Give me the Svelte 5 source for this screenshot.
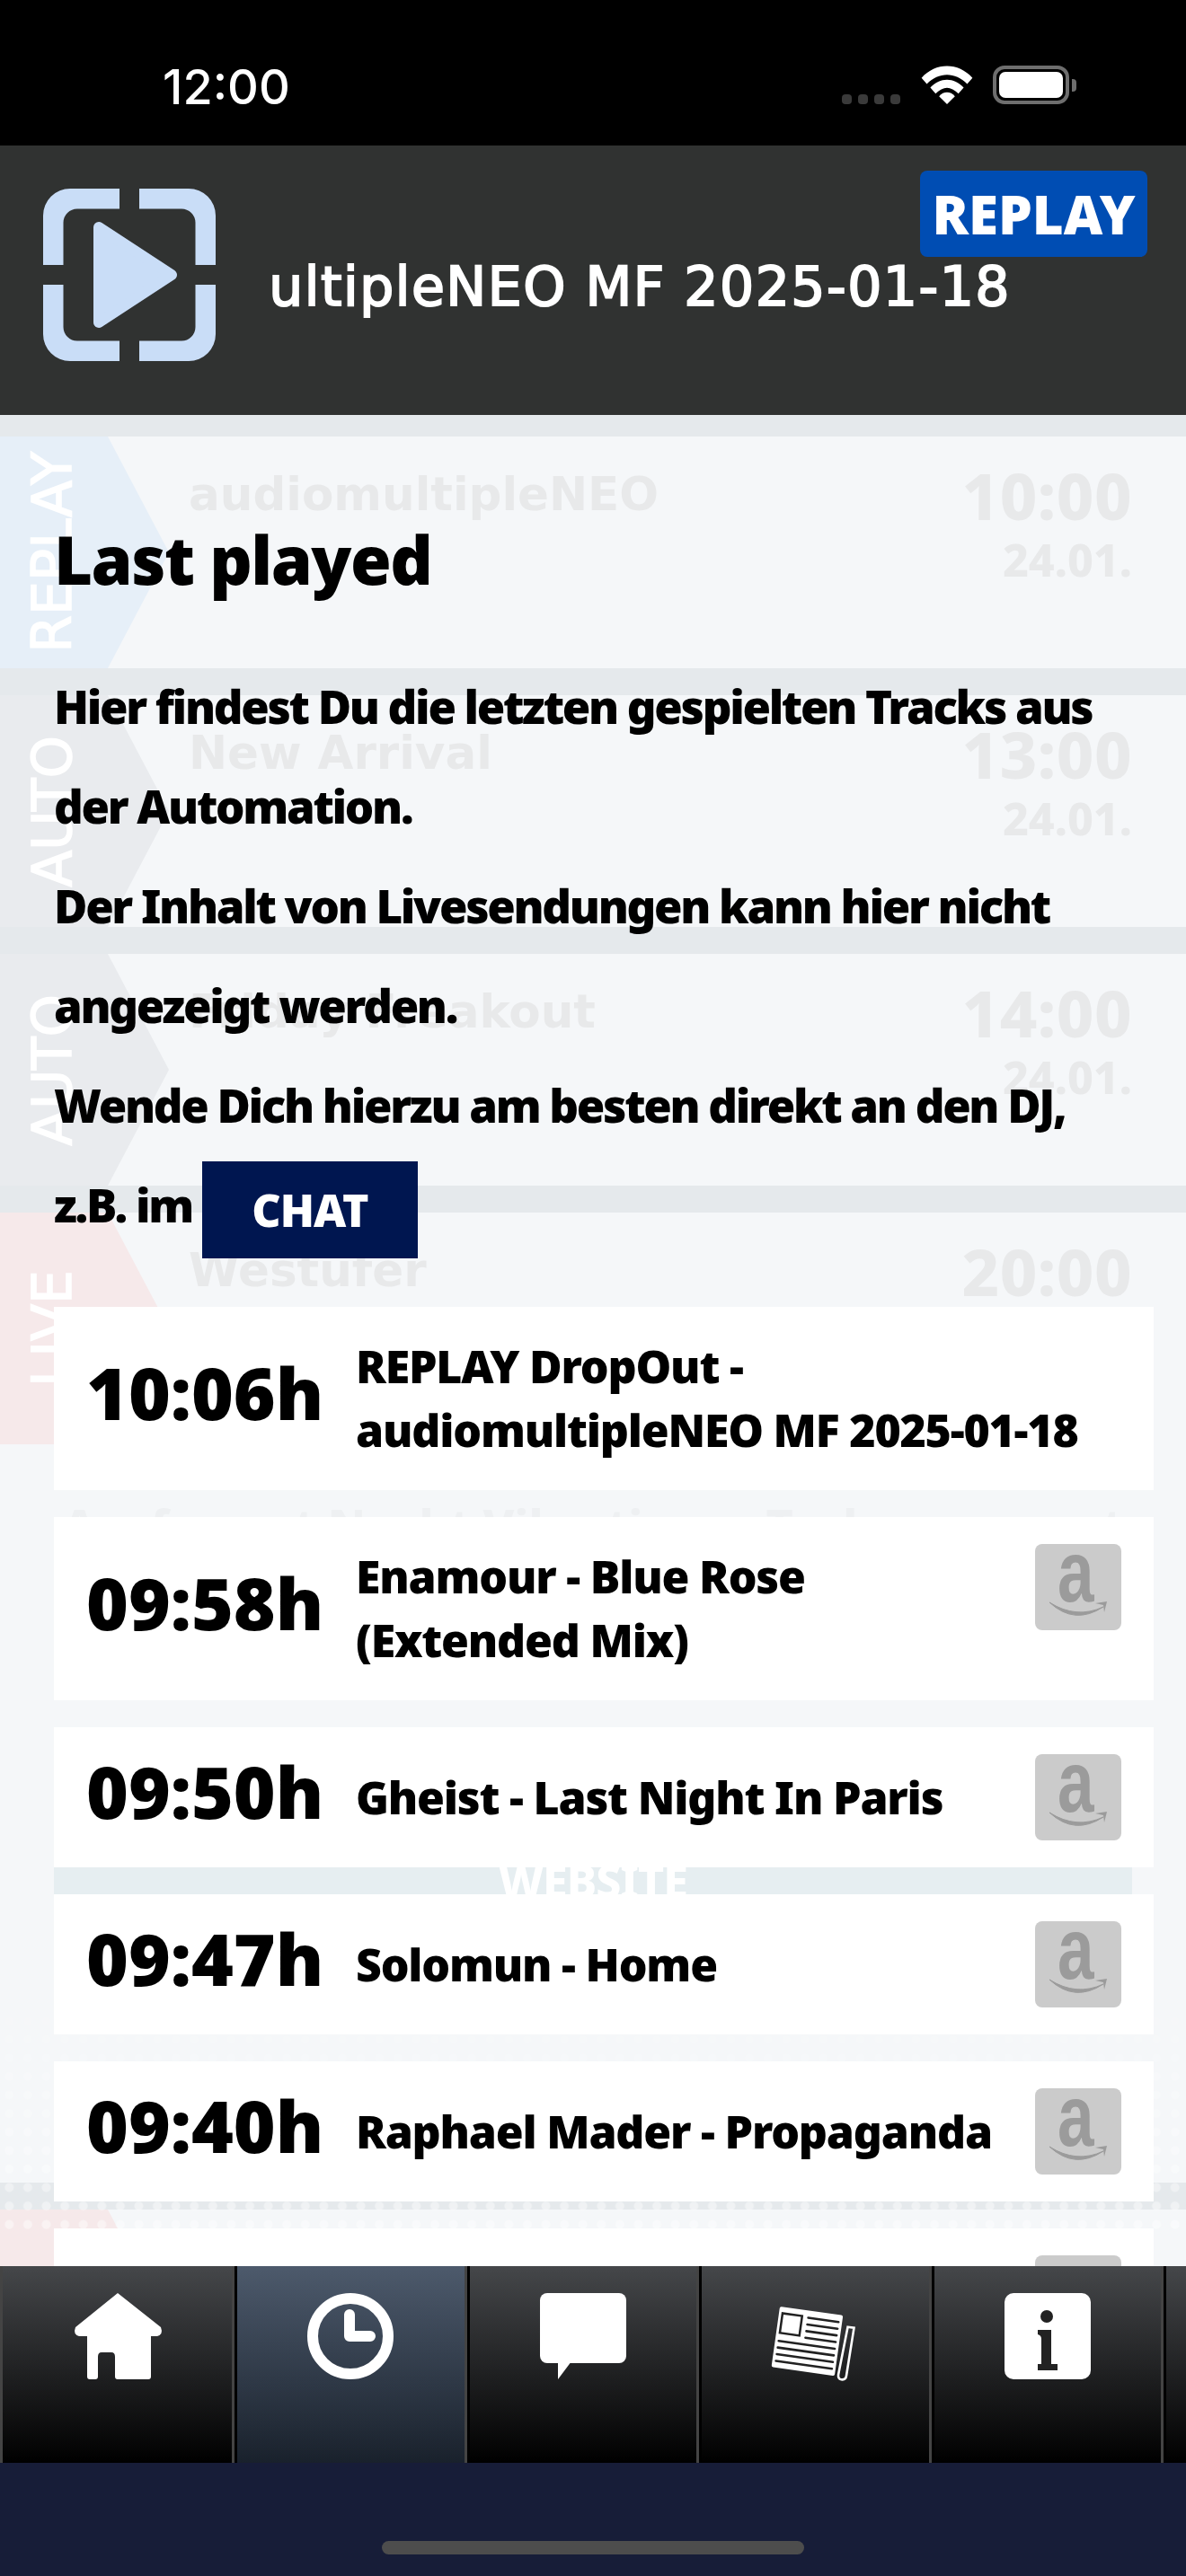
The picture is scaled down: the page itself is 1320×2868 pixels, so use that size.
<script>
  // Last played screen of the radio app: schedule rows sit faded behind the overlay.
  const SCHEDULE = [
    { tag: 'REPLAY', kind: 'replay', show: 'audiomultipleNEO', time: '10:00', date: '24.01.' },
    { tag: 'AUTO', kind: 'auto', show: 'New Arrival', time: '13:00', date: '24.01.' },
    { tag: 'AUTO', kind: 'auto', show: 'Friday Freakout', time: '14:00', date: '24.01.' },
    { tag: 'LIVE', kind: 'live', show: 'Westufer', time: '20:00', date: '' },
  ];

  const TRACKS = [
    { time: '10:06h', title: 'REPLAY DropOut - audiomultipleNEO MF 2025-01-18', shop: false, tall: true },
    { time: '09:58h', title: 'Enamour - Blue Rose (Extended Mix)', shop: true, tall: true },
    { time: '09:50h', title: 'Gheist - Last Night In Paris', shop: true },
    { time: '09:47h', title: 'Solomun - Home', shop: true },
    { time: '09:40h', title: 'Raphael Mader - Propaganda', shop: true },
    { time: '', title: '', shop: true, tall: true },
  ];

  const TABS = ['home', 'clock', 'chat', 'news', 'info', ''];
</script>

<div class="phone">
  <div class="status">
    <span class="clock">12:00</span>
    <div class="status-icons">
      <div class="cell-dots"><i></i><i></i><i></i><i></i></div>
      <svg class="wifi" viewBox="0 0 58 44" aria-hidden="true">
        <path d="M0 14 C16 -4 42 -4 58 14 L52 21 C38 7 20 7 6 21 Z" fill="#fff" />
        <path d="M10 25 C21 13 37 13 48 25 L42 32 C33 23 25 23 16 32 Z" fill="#fff" />
        <path d="M20 35 C25 29 33 29 38 35 L29 44 Z" fill="#fff" />
      </svg>
      <div class="battery"><div class="battery-fill"></div></div>
      <div class="battery-nub"></div>
    </div>
  </div>

  <header class="topbar">
    <svg class="logo" viewBox="0 0 192 192" aria-hidden="true">
      {#each ['', 'translate(192 0) scale(-1 1)', 'translate(0 192) scale(1 -1)', 'translate(192 192) scale(-1 -1)'] as t}
        <path transform={t} fill="#c9ddf7" d="M85 0 H30 A30 30 0 0 0 0 30 V85 H22.5 V38 A15.5 15.5 0 0 1 38 22.5 H85 Z" />
      {/each}
      <path d="M62 43 L143 96 L62 149 Z" fill="#c9ddf7" stroke="#c9ddf7" stroke-width="12" stroke-linejoin="round" />
    </svg>
    <div class="marquee"><span>audiomultipleNEO MF 2025-01-18</span></div>
    <div class="replay-badge">REPLAY</div>
  </header>

  <main class="main">
    <div class="schedule" aria-hidden="true">
      {#each SCHEDULE as row}
        <div class="sched-row">
          <div class="chevron {row.kind}"><span>{row.tag}</span></div>
          <div class="sched-show">{row.show}</div>
          <div class="sched-when">
            <div class="sched-time">{row.time}</div>
            <div class="sched-date">{row.date}</div>
          </div>
        </div>
      {/each}
      <div class="promo">
        <div class="promo-text">Ausformat Nacht Vibrations - Technoconnect</div>
        <div class="promo-bar"><span>WEBSITE</span></div>
        <div class="dots"></div>
      </div>
      <div class="sched-row last">
        <div class="chevron live"></div>
      </div>
    </div>

    <div class="content">
      <h1>Last played</h1>
      <p>Hier findest Du die letzten gespielten Tracks aus der Automation.</p>
      <p>Der Inhalt von Livesendungen kann hier nicht angezeigt werden.</p>
      <p>Wende Dich hierzu am besten direkt an den DJ, z.B. im <button class="chat-btn">CHAT</button></p>

      <div class="tracks">
        {#each TRACKS as track}
          <div class="track" class:tall={track.tall}>
            <div class="track-time">{track.time}</div>
            <div class="track-title" class:narrow={track.shop}>{track.title}</div>
            {#if track.shop}
              <div class="shop">
                <svg viewBox="0 0 96 96" aria-hidden="true">
                  <text x="0" y="64" transform="translate(25 0) scale(0.76 1)" class="shop-a">a</text>
                  <path d="M16 65 Q44 91 76 70 Q46 84 16 65 Z" fill="#9b9b9b" stroke="#9b9b9b" stroke-width="1" />
                  <path d="M67 66 L80 64 L77 76 L76 68 Z" fill="#9b9b9b" />
                </svg>
              </div>
            {/if}
          </div>
        {/each}
      </div>
    </div>
  </main>

  <nav class="tabs">
    {#each TABS as tab, i}
      <div class="tab" class:active={i === 1}>
        {#if tab === 'home'}
          <svg viewBox="0 0 96 96" aria-hidden="true">
            <path fill="#fff" d="M48 0 L96 38 Q99 46 92 48 H85 V93 Q85 96 82 96 H48 Q45 96 45 93 V71 Q45 66 41 66 H30 Q26 66 26 71 V93 Q26 96 23 96 H17 Q14 96 14 93 V48 H5 Q-2 46 1 38 Z" />
          </svg>
        {:else if tab === 'clock'}
          <svg viewBox="0 0 96 96" aria-hidden="true">
            <circle cx="48" cy="48" r="42" fill="none" stroke="#fff" stroke-width="12" />
            <path d="M47 24 V48 H70" fill="none" stroke="#fff" stroke-width="12" stroke-linecap="round" stroke-linejoin="round" />
          </svg>
        {:else if tab === 'chat'}
          <svg viewBox="0 0 96 96" aria-hidden="true">
            <rect width="96" height="78" rx="8" fill="#fff" />
            <path d="M20 76 V96 L35 76 Z" fill="#fff" />
          </svg>
        {:else if tab === 'news'}
          <svg viewBox="0 0 96 96" aria-hidden="true">
            <g transform="translate(9 15) rotate(8)">
              <rect width="71" height="68" rx="2" fill="#fff" />
              <rect x="4" y="7" width="22" height="22" fill="#fff" stroke="#222" stroke-width="2.5" />
              <g stroke="#222" stroke-width="2.6" stroke-linecap="round">
                <path d="M33 8 H67 M33 15.5 H67 M33 23 H67 M33 30.5 H67" />
                <path d="M4 38 H67 M4 45.5 H67 M4 53 H67 M4 60.5 H67" />
              </g>
              <path d="M78 12 H85 L84 66 Q84 71 79 71 Q75 71 75 66 Z" fill="none" stroke="#fff" stroke-width="2.6" />
            </g>
          </svg>
        {:else if tab === 'info'}
          <svg viewBox="0 0 96 96" aria-hidden="true">
            <rect width="96" height="96" rx="10" fill="#fff" />
            <circle cx="47" cy="26" r="7" fill="#222" />
            <path fill="#222" d="M37 41 H52 V79 H59 V86 H37 V79 H41 V51 Q41 47 37 46 Z" />
          </svg>
        {/if}
      </div>
    {/each}
  </nav>

  <div class="home-area"><div class="home-indicator"></div></div>
</div>

<style>
  :global(body) {
    margin: 0;
    background: #000;
  }
  .phone {
    width: 1320px;
    height: 2868px;
    overflow: hidden;
    display: flex;
    flex-direction: column;
    font-family: "Noto Sans", Lato, sans-serif;
    color: #000;
  }
  .status {
    height: 162px;
    background: #000;
    flex: none;
    display: flex;
    justify-content: space-between;
    box-sizing: border-box;
    padding: 62px 122px 0 181px;
  }
  .clock {
    font-family: Inter, sans-serif;
    font-weight: 500;
    font-size: 54px;
    line-height: 70px;
    color: #fff;
  }
  .status-icons {
    display: flex;
    align-items: flex-start;
    padding-top: 11px;
  }
  .cell-dots {
    display: flex;
    gap: 7px;
    margin-top: 32px;
    margin-right: 23px;
  }
  .cell-dots i {
    width: 11px;
    height: 11px;
    border-radius: 4px;
    background: #3a3a3a;
  }
  .wifi {
    width: 58px;
    height: 43px;
    margin-right: 22px;
  }
  .battery {
    width: 85px;
    height: 43px;
    box-sizing: border-box;
    border: 4px solid #6e6e6e;
    border-radius: 13px;
    padding: 3px;
  }
  .battery-fill {
    height: 100%;
    background: #fff;
    border-radius: 7px;
  }
  .battery-nub {
    width: 5px;
    height: 14px;
    margin: 15px 0 0 3px;
    background: #6e6e6e;
    border-radius: 0 4px 4px 0;
  }

  .topbar {
    height: 300px;
    flex: none;
    background: #303231;
    display: flex;
    align-items: flex-start;
    position: relative;
    box-sizing: border-box;
    padding: 48px 200px 0 48px;
  }
  .logo {
    width: 192px;
    height: 192px;
    flex: none;
  }
  .marquee {
    width: 826px;
    margin: 71px 0 0 59px;
    overflow: hidden;
    display: flex;
    justify-content: flex-end;
    font-family: "DejaVu Sans", sans-serif;
    font-size: 60px;
    letter-spacing: 1.5px;
    -webkit-text-stroke: 2px #fff;
    line-height: 76px;
    color: #fff;
    white-space: nowrap;
    flex: none;
  }
  .replay-badge {
    position: absolute;
    left: 1024px;
    top: 28px;
    width: 253px;
    height: 96px;
    background: #004db3;
    border-radius: 8px;
    color: #fff;
    font-weight: 900;
    font-size: 60px;
    line-height: 96px;
    text-align: center;
  }

  .main {
    flex: none;
    height: 2061px;
    position: relative;
    overflow: hidden;
    background: #e5e9ec;
    box-sizing: border-box;
  }
  .schedule {
    position: absolute;
    left: 0;
    right: 0;
    top: 24px;
    z-index: 0;
  }
  .sched-row {
    height: 258px;
    margin-bottom: 30px;
    background: #f5f7f9;
    position: relative;
    display: flex;
    justify-content: space-between;
    box-sizing: border-box;
    padding-left: 210px;
    padding-right: 60px;
    overflow: hidden;
  }
  .sched-row:nth-child(4) {
    margin-bottom: 0;
  }
  .chevron {
    position: absolute;
    left: 0;
    top: 0;
    bottom: 0;
    width: 188px;
    clip-path: polygon(0 0, 120px 0, 188px 50%, 120px 100%, 0 100%);
    display: flex;
    align-items: center;
    justify-content: flex-start;
  }
  .chevron span {
    writing-mode: vertical-rl;
    transform: rotate(180deg);
    font-family: "DejaVu Sans", sans-serif;
    font-size: 60px;
    -webkit-text-stroke: 1.5px #fff;
    color: #fff;
    line-height: 60px;
    margin-left: 28px;
    white-space: nowrap;
  }
  .replay {
    background: #e6eff8;
  }
  .auto {
    background: #e9ebee;
  }
  .live {
    background: #f6e9ea;
  }
  .sched-show {
    font-family: "DejaVu Sans", sans-serif;
    font-weight: 700;
    font-size: 51.5px;
    line-height: 70px;
    margin-top: 29px;
    color: #e8e9ea;
    white-space: nowrap;
  }
  .sched-when {
    text-align: right;
    color: #e8e9ea;
    font-weight: 800;
  }
  .sched-time {
    font-size: 72px;
    letter-spacing: 0.5px;
    line-height: 70px;
    margin-top: 30px;
  }
  .sched-date {
    font-size: 50px;
    line-height: 60px;
    margin-top: 7px;
  }
  .promo {
    height: 822px;
    background: #f5f7f9;
    position: relative;
    margin-bottom: 30px;
  }
  .promo-text {
    position: absolute;
    left: 70px;
    top: 55px;
    font-weight: 800;
    font-size: 52px;
    line-height: 70px;
    color: #eef0f2;
    white-space: nowrap;
  }
  .promo-bar {
    position: absolute;
    left: 60px;
    width: 1200px;
    top: 471px;
    height: 30px;
    overflow: hidden;
    background: #e6eef1;
    text-align: center;
  }
  .promo-bar span {
    color: #fff;
    font-weight: 800;
    font-size: 50px;
    letter-spacing: -1px;
    line-height: 30px;
    display: block;
  }
  .dots {
    position: absolute;
    left: 0;
    right: 0;
    top: 570px;
    height: 304px;
    background-image: radial-gradient(circle, rgba(255, 255, 255, 0.45) 4.5px, transparent 5.5px);
    background-size: 20.6px 20.6px;
    -webkit-mask-image: linear-gradient(to bottom, transparent, #000);
    mask-image: linear-gradient(to bottom, transparent, #000);
    z-index: 2;
  }
  .sched-row.last {
    margin-bottom: 0;
  }

  .content {
    position: relative;
    z-index: 1;
    box-sizing: border-box;
    padding: 0 36px 0 60px;
  }
  h1 {
    margin: 0;
    padding-top: 113px;
    height: 269px;
    box-sizing: border-box;
    font-size: 74px;
    letter-spacing: -1.5px;
    line-height: 96px;
    font-weight: 900;
  }
  p {
    margin: 0;
    max-width: 1190px;
    font-weight: 900;
    font-size: 51px;
    letter-spacing: -2.3px;
    line-height: 111px;
  }
  .chat-btn {
    all: unset;
    display: inline-block;
    width: 240px;
    height: 108px;
    background: #001650;
    color: #fff;
    text-align: center;
    font-weight: 900;
    font-size: 50px;
    letter-spacing: -1px;
    line-height: 108px;
    vertical-align: -5px;
  }
  .tracks {
    margin-top: 54px;
    display: flex;
    flex-direction: column;
    gap: 30px;
  }
  .track {
    min-height: 156px;
    background: #fff;
    display: flex;
    align-items: center;
    box-sizing: border-box;
    padding: 0 36px;
    position: relative;
  }
  .track.tall {
    min-height: 204px;
  }
  .track-time {
    flex: 0 0 300px;
    font-weight: 900;
    font-size: 80px;
    line-height: 90px;
    white-space: nowrap;
    padding-bottom: 14px;
  }
  .track-title {
    width: 840px;
    flex: none;
    font-weight: 900;
    font-size: 50px;
    letter-spacing: -1.2px;
    line-height: 71px;
  }
  .track-title.narrow {
    width: 730px;
  }
  .shop {
    position: absolute;
    right: 36px;
    top: 30px;
    width: 96px;
    height: 96px;
    background: #cbcbcb;
    border-radius: 8px;
  }
  .shop svg {
    display: block;
    width: 96px;
    height: 96px;
  }
  .shop-a {
    font-family: "Liberation Sans", sans-serif;
    font-weight: 700;
    font-size: 96px;
    fill: #9b9b9b;
  }

  .tabs {
    flex: none;
    height: 219px;
    display: flex;
  }
  .tab {
    flex: 0 0 258.5px;
    box-sizing: border-box;
    border-left: 3px solid #000;
    border-right: 3px solid #444;
    background: linear-gradient(to bottom, #45474a, #000);
    display: flex;
    justify-content: center;
    padding-top: 30px;
  }
  .tab:first-child {
    flex-basis: 261px;
    border-left-color: #444;
  }
  .tab.active {
    background: linear-gradient(to bottom, #4d5a6c, #19212c);
  }
  .tab svg {
    width: 96px;
    height: 96px;
    overflow: visible;
  }
  .home-area {
    flex: 1;
    background: #171d38;
    display: flex;
    justify-content: center;
    padding-top: 87px;
  }
  .home-indicator {
    width: 470px;
    height: 15px;
    border-radius: 8px;
    background: #4d4d4d;
  }
</style>
